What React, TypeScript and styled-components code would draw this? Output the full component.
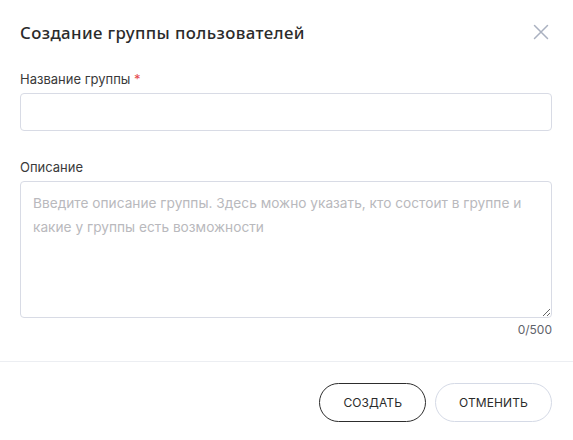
import React, { useState } from "react";
import styled, { createGlobalStyle } from "styled-components";

const GlobalStyle = createGlobalStyle`
  html, body {
    margin: 0;
    padding: 0;
    background: #ffffff;
  }
  body {
    font-family: Inter, "Noto Sans", sans-serif;
    color: #333;
  }
`;

const Modal = styled.div`
  width: 573px;
  height: 440px;
  background: #fff;
  display: flex;
  flex-direction: column;
  box-sizing: border-box;
`;

const Header = styled.div`
  display: flex;
  align-items: center;
  justify-content: space-between;
  padding: 21px 24px 0 20px;
  height: 22px;
`;

const Title = styled.h2`
  margin: 0;
  font-family: "Noto Sans", sans-serif;
  font-size: 16.8px;
  font-weight: 500;
  color: #2b2b2b;
  letter-spacing: 0.4px;
`;

const CloseButton = styled.button`
  border: none;
  background: none;
  padding: 0;
  width: 16px;
  height: 16px;
  display: flex;
  cursor: pointer;
`;

const Body = styled.div`
  display: flex;
  flex-direction: column;
  padding: 0 21px 0 20px;
  margin-top: 28px;
`;

const Field = styled.div<{ $gap?: number }>`
  display: flex;
  flex-direction: column;
  margin-top: ${(p) => p.$gap ?? 0}px;
`;

const Label = styled.label`
  font-size: 13px;
  color: #3a3a3a;
  line-height: 16px;
  margin-bottom: 6px;
`;

const Required = styled.span`
  color: #e5484d;
`;

const Input = styled.input`
  height: 38px;
  box-sizing: border-box;
  border: 1px solid #d8dbe5;
  border-radius: 4px;
  padding: 0 12px;
  font-family: inherit;
  font-size: 14px;
  outline: none;
`;

const TextArea = styled.textarea`
  height: 137px;
  box-sizing: border-box;
  border: 1px solid #d8dbe5;
  border-radius: 4px;
  padding: 9px 12px;
  font-family: inherit;
  font-size: 13.7px;
  line-height: 24px;
  color: #333;
  outline: none;
  resize: vertical;

  &::placeholder {
    color: #b9b9bd;
  }
`;

const Counter = styled.div`
  align-self: flex-end;
  font-size: 12px;
  color: #5f636b;
  margin-top: 4px;
`;

const Divider = styled.div`
  height: 1px;
  background: #eceef2;
  margin-top: 24px;
`;

const Footer = styled.div`
  display: flex;
  justify-content: flex-end;
  gap: 9px;
  padding: 21px 21px 0 20px;
`;

const Button = styled.button<{ $primary?: boolean }>`
  height: 39px;
  padding: 0 ${(p) => (p.$primary ? 23 : 23)}px;
  border-radius: 20px;
  background: #fff;
  border: 1px solid ${(p) => (p.$primary ? "#2d2d2d" : "#d5dae6")};
  font-family: Inter, "Noto Sans", sans-serif;
  font-size: 12px;
  font-weight: 400;
  letter-spacing: 0.1px;
  color: #2b2b2b;
  text-transform: uppercase;
  cursor: pointer;
`;

export default function App() {
  const [description, setDescription] = useState("");

  return (
    <>
      <GlobalStyle />
      <Modal>
        <Header>
          <Title>Создание группы пользователей</Title>
          <CloseButton aria-label="Закрыть">
            <svg width="16" height="16" viewBox="0 0 16 16">
              <path
                d="M1.5 1.5L14.5 14.5M14.5 1.5L1.5 14.5"
                stroke="#aab1c0"
                strokeWidth="1.5"
                strokeLinecap="round"
              />
            </svg>
          </CloseButton>
        </Header>
        <Body>
          <Field>
            <Label>
              Название группы <Required>*</Required>
            </Label>
            <Input />
          </Field>
          <Field $gap={28}>
            <Label>Описание</Label>
            <TextArea
              value={description}
              onChange={(e) => setDescription(e.target.value)}
              placeholder="Введите описание группы. Здесь можно указать, кто состоит в группе и какие у группы есть возможности"
            />
            <Counter>{description.length}/500</Counter>
          </Field>
        </Body>
        <Divider />
        <Footer>
          <Button $primary>Создать</Button>
          <Button>Отменить</Button>
        </Footer>
      </Modal>
    </>
  );
}
